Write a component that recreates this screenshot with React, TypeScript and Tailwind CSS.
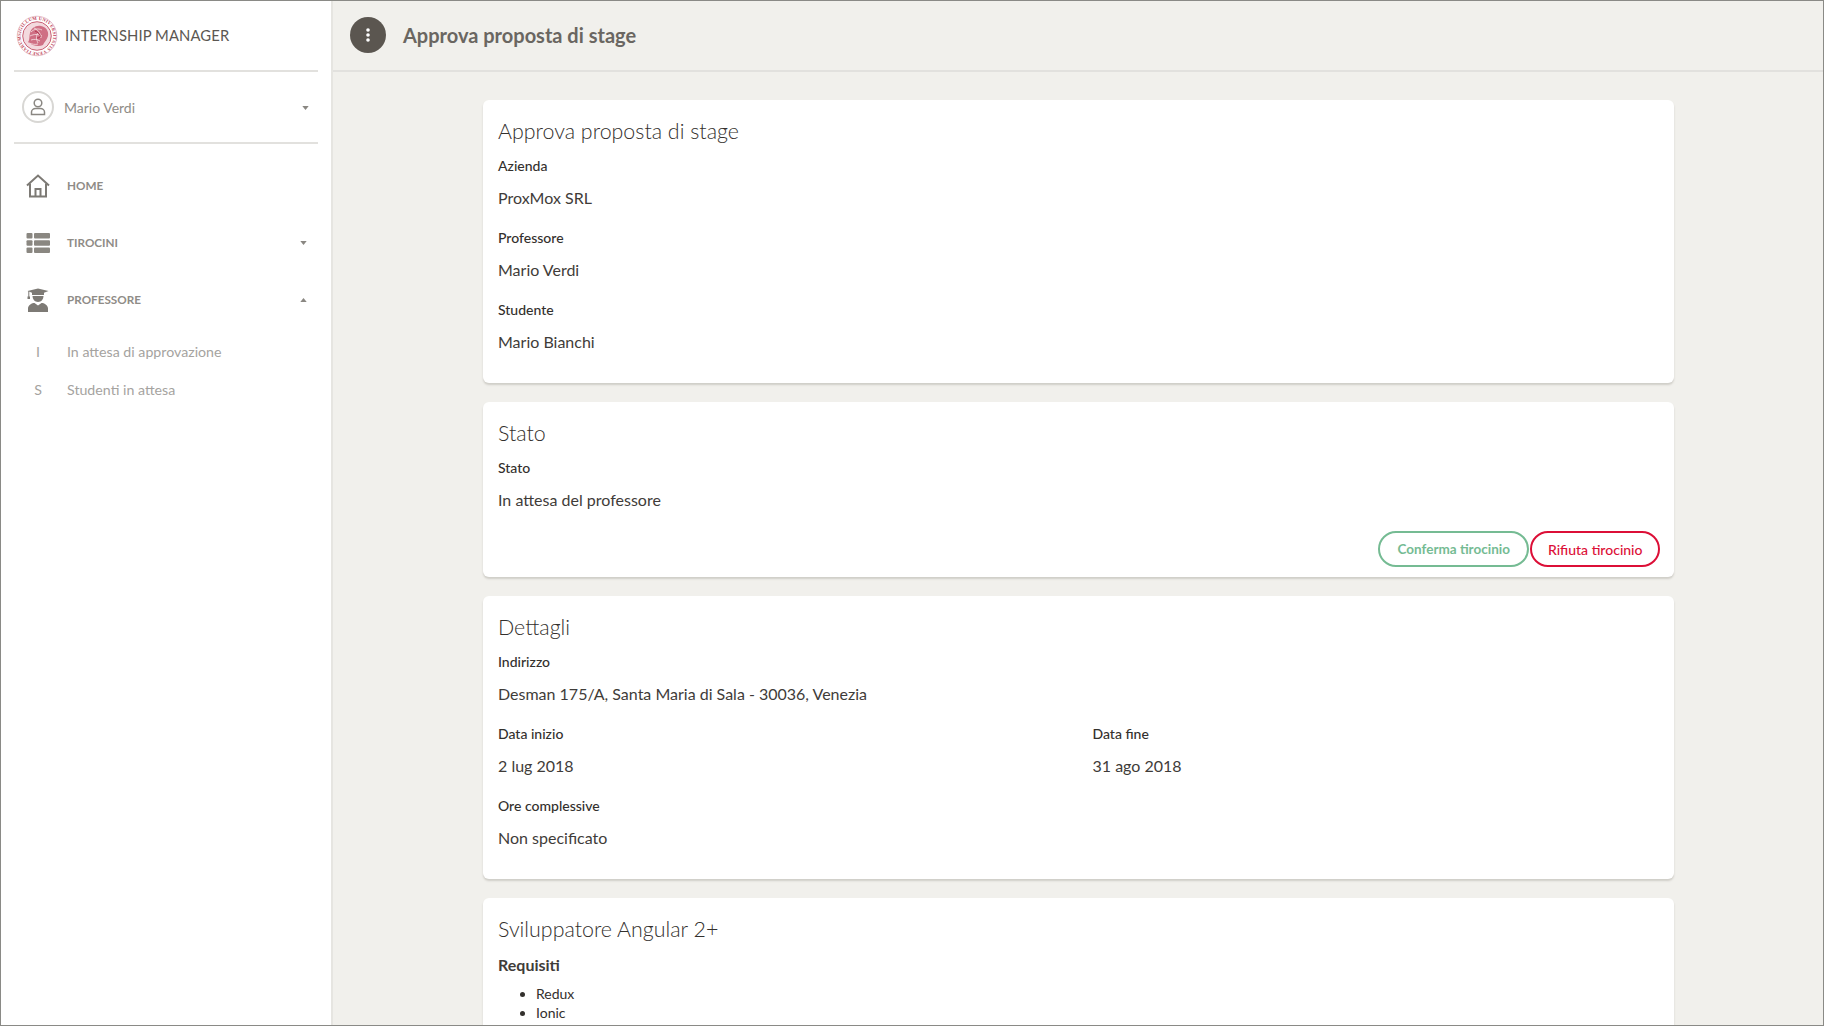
import React from "react";

const font = { fontFamily: '"Lato","Noto Sans",sans-serif' };

function Seal() {
  return (
    <svg width="42" height="42" viewBox="0 0 42 42" className="shrink-0">
      <defs>
        <path id="sealRing" d="M21 21m-16.300 0a16.300 16.300 0 1 1 32.600 0a16.300 16.300 0 1 1-32.600 0" />
      </defs>
      <circle cx="21" cy="21" r="19.800" fill="none" stroke="#d28a99" strokeWidth="0.500" />
      <text fontSize="4.600" fontWeight="700" fill="#bd3f58" letterSpacing="0.250" style={{ fontFamily: '"Liberation Serif",serif' }}>
        <textPath href="#sealRing">SIGILLUM UNIVERSITATIS VENETIARUM</textPath>
      </text>
      <circle cx="21" cy="21" r="14.300" fill="#f3d9de" stroke="#bd3f58" strokeWidth="0.800" />
      <path d="M12 27c2-2 1-6 2-9 1-5 6-8 11-7 5 1 8 5 7 10-1 4-4 6-5 9-4 2-11 1-15-3z" fill="#cf6f84" />
      <path d="M15 17c3-3 7-4 11-2M14 21c4-2 8-2 12 0M15 25c3-1 6-1 9 1M18 13c3 1 7 5 7 10M22 18c-2 3-2 6 0 10M13 28c3 1 6 2 9 1" fill="none" stroke="#f7e4e7" strokeWidth="0.800" />
      <path d="M19 16c2 1 4 2 5 4s-1 3-3 3" fill="none" stroke="#a82942" strokeWidth="0.900" />
    </svg>
  );
}

function Chevron({ up = false }: { up?: boolean }) {
  return (
    <svg width="7" height="4" viewBox="0 0 8 5" className="shrink-0">
      <path d={up ? "M0 5 4 0l4 5z" : "M0 0h8L4 5z"} fill="#8a8782" />
    </svg>
  );
}

function HomeIcon() {
  return (
    <svg width="24" height="24" viewBox="0 0 24 24" fill="none" stroke="#7d7a75" strokeWidth="2">
      <path d="M1 11.500 12 1.500l11 10" />
      <path d="M4 9.500V22.500H20V9.500" />
      <path d="M9.500 22.500V15H14.500V22.500" />
    </svg>
  );
}

function ListIcon() {
  return (
    <svg width="24" height="22" viewBox="0 0 24 22" fill="#8a8781">
      <rect x="0.500" y="1" width="6" height="5.500" rx="1" />
      <rect x="8" y="1" width="16" height="5.500" rx="1" />
      <rect x="0.500" y="8.200" width="6" height="5.500" rx="1" />
      <rect x="8" y="8.200" width="16" height="5.500" rx="1" />
      <rect x="0.500" y="15.500" width="6" height="5.500" rx="1" />
      <rect x="8" y="15.500" width="16" height="5.500" rx="1" />
    </svg>
  );
}

function GradIcon() {
  return (
    <svg width="22" height="24" viewBox="0 0 22 24" fill="#7d7a75">
      <path d="M0.500 3 11 .5 21.500 3 17 4.800V7H5V4.800z" />
      <rect x="1.300" y="3" width="1" height="6" />
      <rect x="0.500" y="8.500" width="2.500" height="2.500" />
      <path d="M5.500 8h11c0 3-2.200 6-5.500 6S5.500 11 5.500 8z" />
      <path d="M1 24v-3.500c0-3.500 4-5.500 6.500-5.500L11 17.500 14.500 15c2.500 0 6.500 2 6.500 5.500V24z" />
    </svg>
  );
}

function Nav({ icon, label, chevron }: { icon: React.ReactNode; label: string; chevron?: "up" | "down" }) {
  return (
    <div className="flex h-[57px] items-center pl-[25px] pr-[24px]">
      <div className="flex w-[24px] justify-center">{icon}</div>
      <span className="ml-[17px] flex-1 text-[11.700px] font-bold text-[#8f8c87]">{label}</span>
      {chevron && <Chevron up={chevron === "up"} />}
    </div>
  );
}

function Sub({ letter, label }: { letter: string; label: string }) {
  return (
    <div className="flex h-[38px] items-center pl-[25px] text-[14.200px] text-[#a5a3a0]">
      <span className="w-[24px] text-center">{letter}</span>
      <span className="ml-[17px]">{label}</span>
    </div>
  );
}

function Field({ label, value }: { label: string; value: string }) {
  return (
    <div className="mb-[18px]">
      <div className="h-[20px] text-[14px] font-medium leading-[20px] text-[#33302d]">{label}</div>
      <div className="mt-[10px] h-[24px] text-[16px] leading-[24px] text-[#3f3c39]">{value}</div>
    </div>
  );
}

function Card({ title, children, className = "" }: { title: string; children: React.ReactNode; className?: string }) {
  return (
    <section className={`mb-[19px] shrink-0 rounded-[6px] bg-white px-[15px] pt-[16px] shadow-[0_2px_2px_rgba(90,85,75,0.22)] ${className}`}>
      <h2 className="h-[30px] text-[21.400px] font-light leading-[30px] text-[#33302d]">{title}</h2>
      {children}
    </section>
  );
}

export default function App() {
  return (
    <div style={font} className="flex h-[1026px] w-[1824px] overflow-hidden border border-[#8a8a86] bg-[#f1f0ec]">
      <aside className="w-[332px] shrink-0 border-r-[2px] border-[#e6e5e1] bg-white">
        <div className="mx-[13px] flex h-[71px] items-center border-b-[2px] border-[#e2e1de] pl-[2px]">
          <Seal />
          <span className="ml-[7px] text-[14.800px] tracking-[0.1px] text-[#5b5752]">INTERNSHIP MANAGER</span>
        </div>
        <div className="mx-[13px] flex h-[72px] items-center border-b-[2px] border-[#e2e1de] pl-[8px] pr-[9px]">
          <div className="flex h-[32px] w-[32px] items-center justify-center rounded-full border-[2px] border-[#d8d7d4]">
            <svg width="16" height="18" viewBox="0 0 16 18" fill="none" stroke="#8a8782" strokeWidth="1.500">
              <circle cx="8" cy="5" r="3.800" />
              <path d="M1.500 16.500V14c0-2 2-3.500 4-3.500h5c2 0 4 1.500 4 3.500v2.500z" />
            </svg>
          </div>
          <span className="ml-[10px] flex-1 text-[14px] text-[#8f8c87]">Mario Verdi</span>
          <div className="pt-[2px]">
            <Chevron />
          </div>
        </div>
        <nav className="pt-[13px]">
          <Nav icon={<HomeIcon />} label="HOME" />
          <Nav icon={<ListIcon />} label="TIROCINI" chevron="down" />
          <Nav icon={<GradIcon />} label="PROFESSORE" chevron="up" />
          <div className="pt-[5px]">
            <Sub letter="I" label="In attesa di approvazione" />
            <Sub letter="S" label="Studenti in attesa" />
          </div>
        </nav>
      </aside>
      <main className="flex min-w-0 flex-1 flex-col">
        <header className="flex h-[71px] shrink-0 items-center border-b-[2px] border-[#e2e1de] pb-[2px] pl-[17px]">
          <div className="flex h-[36px] w-[36px] items-center justify-center rounded-full bg-[#5b5650]">
            <svg width="4" height="14" viewBox="0 0 4 14" fill="#fff">
              <circle cx="2" cy="2" r="1.800" />
              <circle cx="2" cy="7" r="1.800" />
              <circle cx="2" cy="12" r="1.800" />
            </svg>
          </div>
          <h1 className="ml-[17px] text-[20px] font-bold text-[#6a6661]">Approva proposta di stage</h1>
        </header>
        <div className="flex flex-1 flex-col overflow-hidden pl-[150px] pr-[149px] pt-[28px]">
          <Card title="Approva proposta di stage" className="h-[283px]">
            <div className="mt-[10px]">
              <Field label="Azienda" value="ProxMox SRL" />
              <Field label="Professore" value="Mario Verdi" />
              <Field label="Studente" value="Mario Bianchi" />
            </div>
          </Card>
          <Card title="Stato" className="h-[175px]">
            <div className="mt-[10px]">
              <Field label="Stato" value="In attesa del professore" />
            </div>
            <div className="-mr-[1px] flex justify-end gap-[1px] pt-[1px]">
              <button className="h-[36px] rounded-full border-[2px] border-[#75bb93] px-[17.500px] text-[13.500px] font-bold text-[#75bb93]">Conferma tirocinio</button>
              <button className="h-[36px] rounded-full border-[2px] border-[#dc0f37] px-[15.500px] text-[14px] font-medium text-[#dc0f37]">Rifiuta tirocinio</button>
            </div>
          </Card>
          <Card title="Dettagli" className="h-[283px]">
            <div className="mt-[10px]">
              <Field label="Indirizzo" value="Desman 175/A, Santa Maria di Sala - 30036, Venezia" />
              <div className="grid grid-cols-2 gap-x-[28px]">
                <Field label="Data inizio" value="2 lug 2018" />
                <Field label="Data fine" value="31 ago 2018" />
              </div>
              <Field label="Ore complessive" value="Non specificato" />
            </div>
          </Card>
          <Card title="Sviluppatore Angular 2+" className="h-[300px]">
            <div className="mt-[9px] text-[16px] font-bold leading-[24px] text-[#3f3c39]">Requisiti</div>
            <ul className="mt-[7px] list-disc pl-[38px] text-[14px] leading-[19px] text-[#33302d]">
              <li>Redux</li>
              <li>Ionic</li>
            </ul>
          </Card>
        </div>
      </main>
    </div>
  );
}
